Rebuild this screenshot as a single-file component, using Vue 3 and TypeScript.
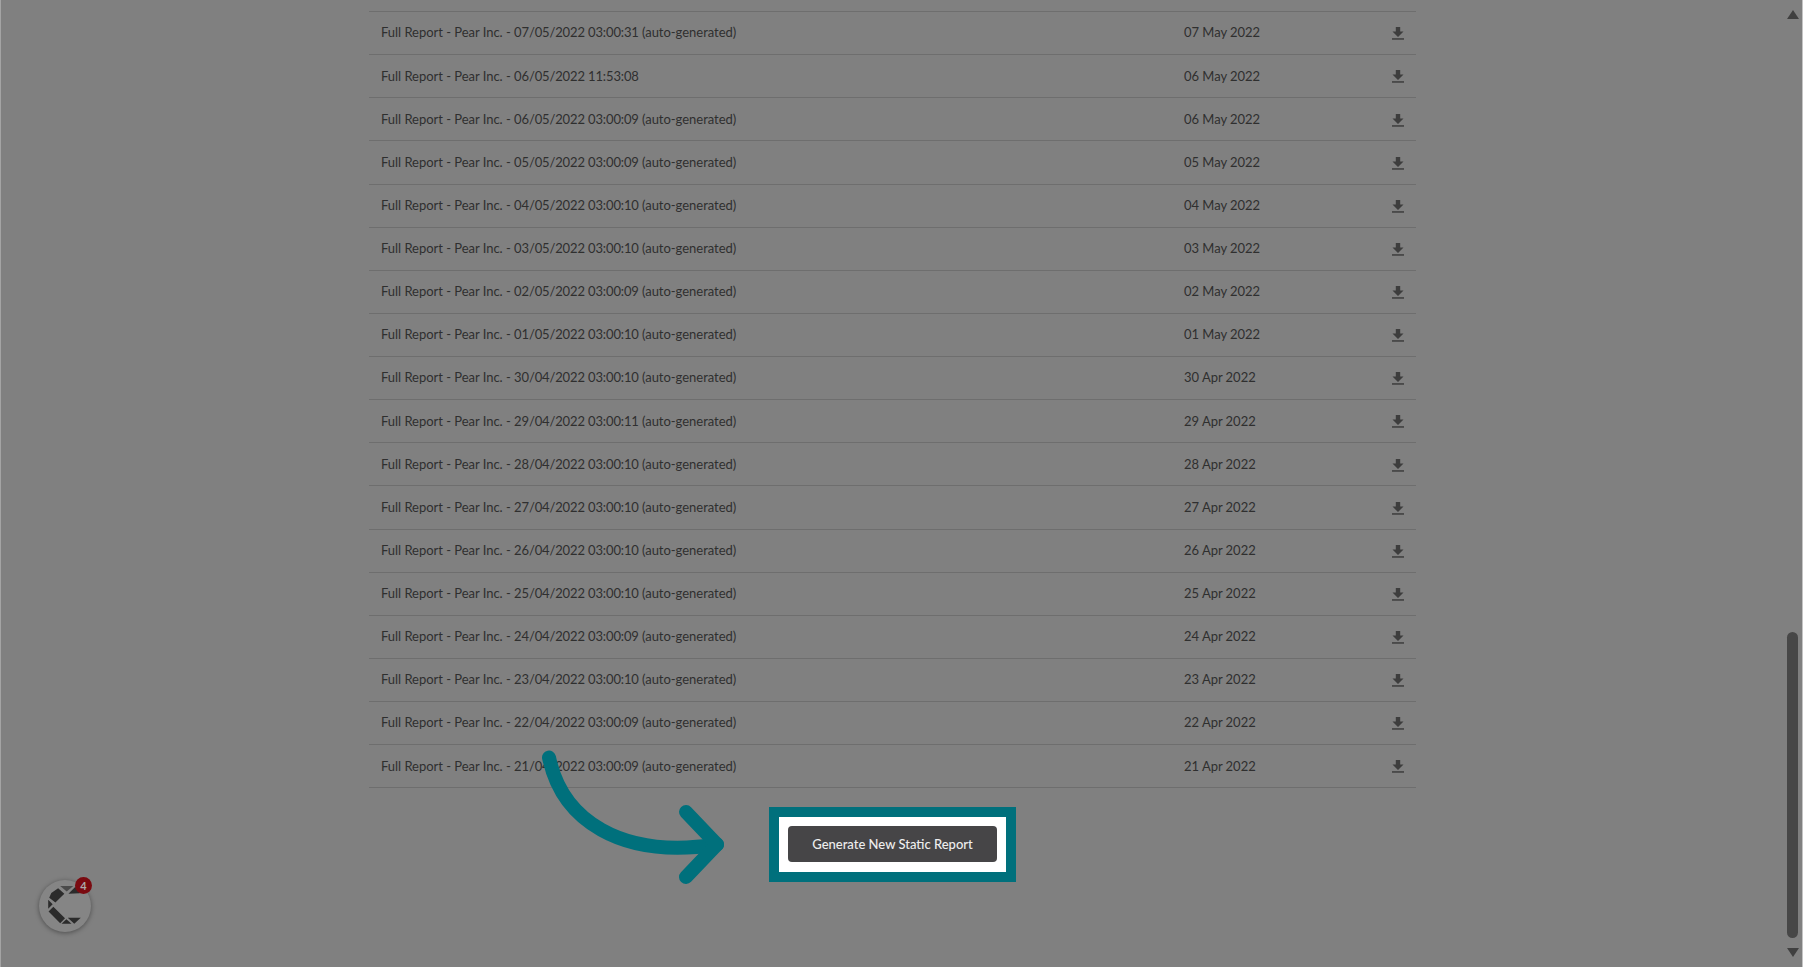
<template>
  <div class="page">
    <main class="content">
      <div class="reports">
        <div v-for="r in rows" :key="r.stamp" class="row">
          <span class="name">Full Report - Pear Inc. - <span class="stamp">{{ r.stamp }}</span>{{ r.suffix }}</span>
          <span class="date">{{ r.date }}</span>
          <a class="dl" href="#">
            <svg width="12" height="13" viewBox="0 0 12 13">
              <path d="M3.8 0h4.4v4.6h3.3L6 10 .5 4.6h3.3z" fill="#3d3d3d" />
              <rect x="0" y="11.2" width="12" height="1.5" fill="#3d3d3d" />
            </svg>
          </a>
        </div>
      </div>
      <div class="actions">
        <div class="highlight">
          <button class="generate">Generate New Static Report</button>
        </div>
        <svg class="arrow" width="200" height="140" viewBox="0 0 200 140">
          <path d="M10 10.5C23 72.5 81 112.5 178 97.5" fill="none" stroke="#00707c" stroke-width="14" stroke-linecap="round" />
          <path d="M147 65L178 97.5L147 130" fill="none" stroke="#00707c" stroke-width="14" stroke-linecap="round" stroke-linejoin="round" />
        </svg>
      </div>
    </main>
    <aside class="scrollbar">
      <span class="up"></span>
      <span class="thumb"></span>
      <span class="down"></span>
    </aside>
    <div class="widget">
      <svg class="logo" width="72" height="72" viewBox="-1 3 210 210">
        <path d="M90 50H128L109 66Z" fill="#4a4a4a" />
        <path d="M64 70L84 56L102 72L76 98L58 84ZM55 90L68 103L55 116ZM56 124L70 110L104 144L90 158ZM94 160L108 147L123 160ZM112 142H150L131 160ZM114 72L133 53H147V71Z" fill="#2b2b2b" />
      </svg>
      <span class="badge">4</span>
    </div>
  </div>
</template>

<script setup lang="ts">
interface Report {
  stamp: string
  suffix: string
  date: string
}

const months: Record<string, string> = { '04': 'Apr', '05': 'May' }

const stamps = [
  '07/05/2022 03:00:31',
  '06/05/2022 11:53:08',
  '06/05/2022 03:00:09',
  '05/05/2022 03:00:09',
  '04/05/2022 03:00:10',
  '03/05/2022 03:00:10',
  '02/05/2022 03:00:09',
  '01/05/2022 03:00:10',
  '30/04/2022 03:00:10',
  '29/04/2022 03:00:11',
  '28/04/2022 03:00:10',
  '27/04/2022 03:00:10',
  '26/04/2022 03:00:10',
  '25/04/2022 03:00:10',
  '24/04/2022 03:00:09',
  '23/04/2022 03:00:10',
  '22/04/2022 03:00:09',
  '21/04/2022 03:00:09'
]

const rows: Report[] = stamps.map((s) => ({
  stamp: s,
  suffix: s.indexOf('11:53') === -1 ? ' (auto-generated)' : '',
  date: s.slice(0, 2) + ' ' + months[s.slice(3, 5)] + ' 2022'
}))
</script>

<style>
html,
body {
  margin: 0;
  background: #808080;
}
</style>

<style scoped>
.page {
  position: relative;
  display: flex;
  height: 967px;
  overflow: hidden;
  background: #808080;
  border-left: 1px solid #a4a4a4;
  border-right: 1px solid #c4c4c4;
  box-sizing: border-box;
  font-family: Lato, "Liberation Sans", sans-serif;
}

.content {
  flex: 1;
  padding: 11px 1px 0 0;
}

.reports {
  width: 1047px;
  margin: 0 auto;
  border-top: 1px solid #6e6e6e;
}

.row {
  display: grid;
  grid-template-columns: 803px 1fr 12px;
  align-items: center;
  height: 43.14px;
  box-sizing: border-box;
  padding: 0 12px;
  border-bottom: 1px solid #6e6e6e;
  font-size: 13px;
  letter-spacing: -0.03px;
  color: #2f2f2f;
}

.name,
.date {
  position: relative;
  top: -0.6px;
}

.stamp {
  letter-spacing: -0.13px;
}

.dl {
  display: flex;
  line-height: 0;
  padding-top: 1.4px;
}

.actions {
  position: relative;
  width: 1047px;
  margin: 19px auto 0;
  display: flex;
  justify-content: center;
}

.highlight {
  padding: 9px 9px 10px;
  background: #fff;
  border: 10px solid #00707c;
}

.generate {
  display: block;
  width: 209px;
  height: 36px;
  padding: 0;
  border: none;
  border-radius: 4px;
  background: #464547;
  color: #eee;
  font-family: inherit;
  font-size: 13px;
  font-weight: 500;
}

.arrow {
  position: absolute;
  left: 170px;
  top: -60px;
  overflow: visible;
}

.scrollbar {
  width: 17px;
  box-sizing: border-box;
  padding: 10px 2px 0 0;
  display: flex;
  flex-direction: column;
  align-items: center;
}

.up {
  width: 0;
  height: 0;
  border-left: 6px solid transparent;
  border-right: 6px solid transparent;
  border-bottom: 9px solid #404040;
}

.thumb {
  width: 11px;
  height: 306px;
  margin-top: 613px;
  border-radius: 6px;
  background: #474747;
}

.down {
  width: 0;
  height: 0;
  margin-top: 10px;
  border-left: 6px solid transparent;
  border-right: 6px solid transparent;
  border-top: 9px solid #404040;
}

.widget {
  position: absolute;
  left: 38px;
  top: 880px;
  width: 52px;
  height: 52px;
  display: flex;
  align-items: center;
  justify-content: center;
  border-radius: 50%;
  background: #858585;
  box-shadow: 0 1px 5px rgba(0, 0, 0, 0.4);
}

.logo {
  flex: none;
}

.badge {
  position: absolute;
  left: 36px;
  top: -3px;
  width: 17px;
  height: 17px;
  border-radius: 50%;
  background: #7a0a10;
  color: #aaa;
  font-size: 11px;
  font-weight: 700;
  line-height: 17px;
  text-align: center;
}
</style>
